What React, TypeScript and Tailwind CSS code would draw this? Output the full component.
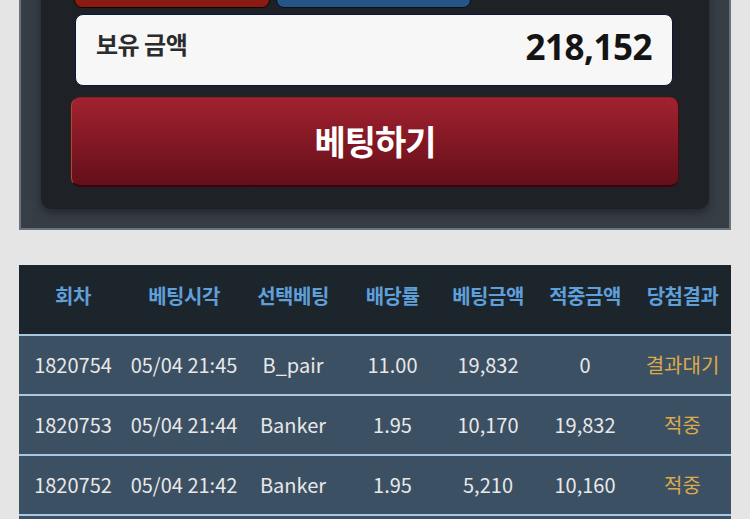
import React from "react";

const rows = [
  { no: "1820754", time: "05/04 21:45", pick: "B_pair", odds: "11.00", bet: "19,832", win: "0", result: "결과대기" },
  { no: "1820753", time: "05/04 21:44", pick: "Banker", odds: "1.95", bet: "10,170", win: "19,832", result: "적중" },
  { no: "1820752", time: "05/04 21:42", pick: "Banker", odds: "1.95", bet: "5,210", win: "10,160", result: "적중" },
];

const headers = ["회차", "베팅시각", "선택베팅", "배당률", "베팅금액", "적중금액", "당첨결과"];

const grid = "grid grid-cols-[108px_114px_104px_95px_96px_98px_97px]";

export default function App() {
  return (
    <div
      className="w-[750px] h-[519px] overflow-hidden bg-[#e5e5e5]"
      style={{ fontFamily: '"Noto Sans CJK KR", "Noto Sans", sans-serif' }}
    >
      {/* top panel */}
      <div className="ml-[19px] w-[712px] -mt-[60px] bg-[#363d45] border-x-2 border-b-2 border-[#68747f] px-[20px] pb-[19px]">
        <div className="bg-[#1e2226] rounded-b-[10px] shadow-[0_4px_8px_rgba(0,0,0,0.35)] px-[30px] pt-[8px] pb-[22px]">
          <div className="flex gap-[6px] ml-[3px] h-[60px]">
            <div className="w-[196px] h-full rounded-[8px] bg-[#8b1b12] border border-[#120404]" />
            <div className="w-[195px] h-full rounded-[8px] bg-[#245586] border border-[#08101c]" />
          </div>
          <div className="mt-[6px] ml-[4px] mr-[6px] h-[72px] rounded-[8px] bg-[#f7f7f7] border border-[#0c1638] flex items-start justify-between pl-[20px] pr-[20px]">
            <span className="mt-[13px] text-[24px] leading-[32px] font-bold text-[#2b2b2b] tracking-[-0.5px]">보유 금액</span>
            <span
              className="mt-[10px] text-[35px] leading-[44px] font-bold text-[#141414] tracking-[-0.5px]"
              style={{ fontFamily: '"Noto Sans", "Noto Sans CJK KR", sans-serif' }}
            >
              218,152
            </span>
          </div>
          <button className="mt-[11px] w-full h-[90px] rounded-[9px] bg-gradient-to-b from-[#a2222f] to-[#640f1a] border-l border-l-[#c2412f] border-b-2 border-b-[#3a0508] border-r border-r-[#4a0a0e] border-t border-t-[#8d1e26] flex items-center justify-center pb-[2px]">
            <span className="text-[34px] font-bold text-white tracking-[-1px] leading-none">베팅하기</span>
          </button>
        </div>
      </div>

      {/* table */}
      <div className="ml-[19px] w-[712px] mt-[35px]">
        <div className={`${grid} h-[71px] bg-[#1c242c] border-b-2 border-[#a8c8e2]`}>
          {headers.map((h) => (
            <div key={h} className="flex items-center justify-center pb-[7px] text-[20px] font-bold text-[#5f9fda] tracking-[-0.5px]">
              {h}
            </div>
          ))}
        </div>
        {rows.map((r) => (
          <div key={r.no} className={`${grid} h-[60px] bg-[#3c5064] border-b-2 border-[#a8c8e2] text-[20px] text-[#e8e8e8]`}>
            <div className="flex items-center justify-center">{r.no}</div>
            <div className="flex items-center justify-center">{r.time}</div>
            <div className="flex items-center justify-center">{r.pick}</div>
            <div className="flex items-center justify-center">{r.odds}</div>
            <div className="flex items-center justify-center">{r.bet}</div>
            <div className="flex items-center justify-center">{r.win}</div>
            <div className="flex items-center justify-center text-[20px] text-[#dcaa4a]">{r.result}</div>
          </div>
        ))}
        <div className="h-[60px] bg-[#3c5064]" />
      </div>
    </div>
  );
}
